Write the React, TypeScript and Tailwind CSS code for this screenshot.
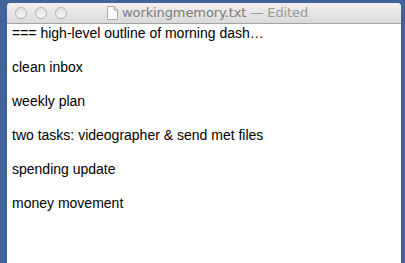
import React from "react";

const lines = [
  "=== high-level outline of morning dash…",
  "",
  "clean inbox",
  "",
  "weekly plan",
  "",
  "two tasks: videographer & send met files",
  "",
  "spending update",
  "",
  "money movement",
];

function Light() {
  return (
    <div className="w-[12px] h-[12px] rounded-full border border-[#b0b0b0] bg-gradient-to-b from-[#e2e2e2] to-[#f6f6f6]" />
  );
}

export default function App() {
  return (
    <div className="w-[405px] h-[263px] bg-[#40649a] pt-[3px] pl-[7px] pr-[4px] flex flex-col overflow-hidden">
      <div className="flex-1 flex flex-col bg-white rounded-t-[4px] overflow-hidden">
        <div className="h-[21px] shrink-0 relative flex items-center bg-gradient-to-b from-[#f0f0f0] to-[#dadada] border-b border-[#a3a3a3]">
          <div className="flex items-center gap-[8px] pl-[8px]">
            <Light />
            <Light />
            <Light />
          </div>
          <div className="absolute left-[100px] top-[2px] flex items-center gap-[4px]">
            <svg width="11" height="14" viewBox="0 0 11 14">
              <path d="M0.5 0.5 H7 L10.5 4 V13.5 H0.5 Z" fill="#fbfbfb" stroke="#a8a8a8" />
              <path d="M7 0.5 V4 H10.5" fill="none" stroke="#a8a8a8" />
            </svg>
            <span className="text-[13px] leading-[16px] text-[#7b7b7b] font-['DejaVu_Sans',sans-serif] tracking-[-0.1px]">
              workingmemory.txt <span className="text-[#9a9a9a]">— Edited</span>
            </span>
          </div>
        </div>
        <div className="pl-[5px] pt-[1px] font-['Liberation_Sans',Arial,sans-serif] text-[14px] leading-[17px] text-black">
          {lines.map((l, i) => (
            <div key={i} className="h-[17px] whitespace-pre">
              {l || " "}
            </div>
          ))}
        </div>
      </div>
    </div>
  );
}
